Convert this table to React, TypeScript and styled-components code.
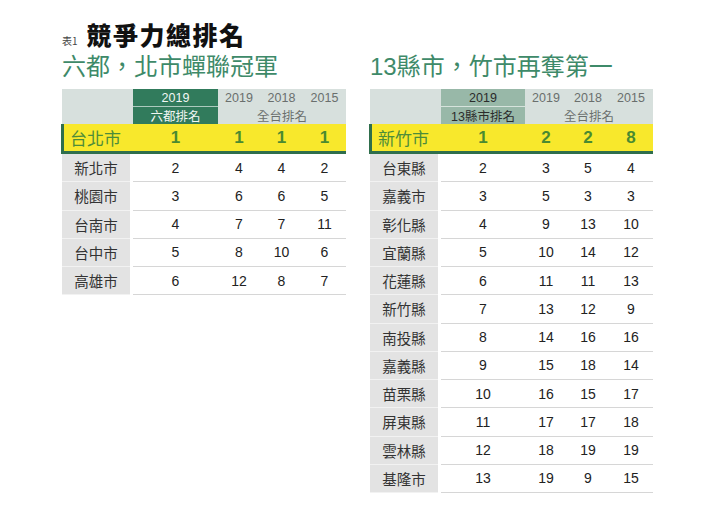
import React from "react";
import styled, { createGlobalStyle } from "styled-components";

const Global = createGlobalStyle`
  html, body { margin: 0; padding: 0; background: #ffffff; }
  body { font-family: "Noto Sans CJK TC", "Liberation Sans", sans-serif; }
`;

const Page = styled.div`
  width: 717px;
  height: 519px;
  box-sizing: border-box;
  padding: 19px 0 0 62px;
`;

const TitleRow = styled.div`
  display: flex;
  align-items: baseline;
  gap: 9px;
  height: 31px;
`;

const TableNo = styled.span`
  font-size: 10px;
  color: #444;
  font-family: "Noto Sans CJK TC", sans-serif;
`;

const Title = styled.h1`
  margin: 0;
  font-size: 25px;
  line-height: 31px;
  font-weight: 900;
  letter-spacing: 1.5px;
  color: #111;
  font-family: "Noto Sans CJK TC", sans-serif;
`;

const Columns = styled.div`
  display: flex;
  gap: 24px;
  align-items: flex-start;
`;

const Column = styled.div`
  display: flex;
  flex-direction: column;
`;

const Subtitle = styled.h2`
  margin: 0 0 5px 0;
  font-size: 24px;
  line-height: 34px;
  font-weight: 400;
  color: #3e8a69;
  font-family: "Liberation Sans", "Noto Sans CJK TC", sans-serif;
`;

const Grid = styled.div<{ $cols: string }>`
  display: grid;
  grid-template-columns: ${(p) => p.$cols};
`;

const Header = styled(Grid)`
  grid-template-rows: 18px 17px;
  background: #d7e0dd;
`;

const Corner = styled.div`
  grid-row: span 2;
  background: #d7e0dd;
`;

const HeadCell = styled.div<{ $dark?: "green" | "sage"; $span?: number; $divider?: boolean }>`
  display: flex;
  align-items: center;
  justify-content: center;
  font-size: 12.5px;
  font-family: "Liberation Sans", "Noto Sans CJK TC", sans-serif;
  grid-column: span ${(p) => p.$span ?? 1};
  background: ${(p) =>
    p.$dark === "green" ? "#317b5c" : p.$dark === "sage" ? "#98b8a8" : "#d7e0dd"};
  color: ${(p) => (p.$dark === "green" ? "#f2f7f4" : p.$dark === "sage" ? "#2b2b2b" : "#6a6f6d")};
  box-shadow: ${(p) => (p.$divider ? "inset 0 -1px 0 rgba(255,255,255,0.6)" : "none")};
`;

const HighlightRow = styled(Grid)`
  height: 27px;
  background: #f8e82c;
  border-left: 3px solid #2f6e4c;
  border-bottom: 3px solid #2f6e4c;
  margin-left: -1px;
`;

const HighlightName = styled.div`
  display: flex;
  align-items: center;
  padding-left: 6px;
  font-size: 17px;
  color: #4d8c3a;
`;

const HighlightNum = styled.div`
  display: flex;
  align-items: center;
  justify-content: center;
  font-size: 17px;
  font-weight: 700;
  color: #4a8a31;
  font-family: "Liberation Sans", sans-serif;
`;

const DataRow = styled(Grid)<{ $h: number }>`
  height: ${(p) => p.$h}px;
`;

const NameCell = styled.div`
  display: flex;
  align-items: center;
  justify-content: center;
  margin-right: 3px;
  background: #e3e3e3;
  border-bottom: 1px solid #f2f2f2;
  font-size: 14.5px;
  color: #333;
`;

const NumCell = styled.div`
  display: flex;
  align-items: center;
  justify-content: center;
  font-size: 14px;
  color: #222;
  font-family: "Liberation Sans", sans-serif;
  border-bottom: 1px solid #d6d6d6;
`;

type Row = [string, number, number, number, number];

interface TableProps {
  subtitle: string;
  cols: string;
  rankLabel: string;
  rankTone: "green" | "sage";
  top: Row;
  rows: Row[];
  rowHeight: number;
  highlightCols: string;
}

const RankTable: React.FC<TableProps> = ({
  subtitle,
  cols,
  rankLabel,
  rankTone,
  top,
  rows,
  rowHeight,
  highlightCols,
}) => (
  <Column>
    <Subtitle>{subtitle}</Subtitle>
    <Header $cols={cols}>
      <Corner />
      <HeadCell $dark={rankTone} $divider>2019</HeadCell>
      <HeadCell>2019</HeadCell>
      <HeadCell>2018</HeadCell>
      <HeadCell>2015</HeadCell>
      <HeadCell $dark={rankTone}>{rankLabel}</HeadCell>
      <HeadCell $span={3}>全台排名</HeadCell>
    </Header>
    <HighlightRow $cols={highlightCols}>
      <HighlightName>{top[0]}</HighlightName>
      {top.slice(1).map((v, i) => (
        <HighlightNum key={i}>{v}</HighlightNum>
      ))}
    </HighlightRow>
    {rows.map((r) => (
      <DataRow key={r[0]} $cols={cols} $h={rowHeight}>
        <NameCell>{r[0]}</NameCell>
        {r.slice(1).map((v, i) => (
          <NumCell key={i}>{v}</NumCell>
        ))}
      </DataRow>
    ))}
  </Column>
);

const sixRows: Row[] = [
  ["新北市", 2, 4, 4, 2],
  ["桃園市", 3, 6, 6, 5],
  ["台南市", 4, 7, 7, 11],
  ["台中市", 5, 8, 10, 6],
  ["高雄市", 6, 12, 8, 7],
];

const countyRows: Row[] = [
  ["台東縣", 2, 3, 5, 4],
  ["嘉義市", 3, 5, 3, 3],
  ["彰化縣", 4, 9, 13, 10],
  ["宜蘭縣", 5, 10, 14, 12],
  ["花蓮縣", 6, 11, 11, 13],
  ["新竹縣", 7, 13, 12, 9],
  ["南投縣", 8, 14, 16, 16],
  ["嘉義縣", 9, 15, 18, 14],
  ["苗栗縣", 10, 16, 15, 17],
  ["屏東縣", 11, 17, 17, 18],
  ["雲林縣", 12, 18, 19, 19],
  ["基隆市", 13, 19, 9, 15],
];

export default function App() {
  return (
    <>
      <Global />
      <Page>
        <TitleRow>
          <TableNo>表1</TableNo>
          <Title>競爭力總排名</Title>
        </TitleRow>
        <Columns>
          <RankTable
            subtitle="六都，北市蟬聯冠軍"
            cols="71px 85px 42px 43px 43px"
            highlightCols="69px 85px 42px 43px 43px"
            rankLabel="六都排名"
            rankTone="green"
            top={["台北市", 1, 1, 1, 1]}
            rows={sixRows}
            rowHeight={28.25}
          />
          <RankTable
            subtitle="13縣市，竹市再奪第一"
            cols="71px 84px 42px 42px 44px"
            highlightCols="69px 84px 42px 42px 44px"
            rankLabel="13縣市排名"
            rankTone="sage"
            top={["新竹市", 1, 2, 2, 8]}
            rows={countyRows}
            rowHeight={28.25}
          />
        </Columns>
      </Page>
    </>
  );
}
